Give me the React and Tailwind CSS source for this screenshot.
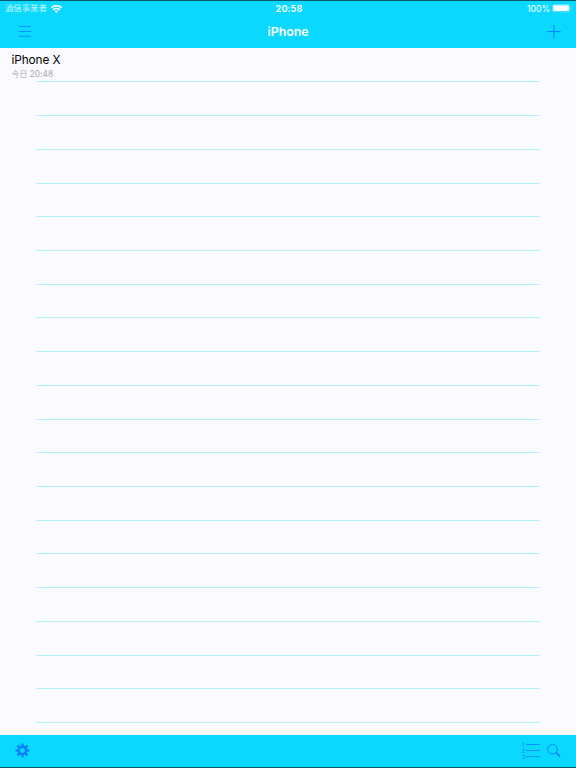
const emptyRows = Array.from({ length: 19 }, (_, i) => i);

function StatusBar() {
    return (
        <div className="grid h-[15px] grid-cols-3 items-center pr-[4px] pl-[5px] text-white">
            <div className="flex items-center gap-[4px]">
                <span className="text-[8.4px] leading-none font-light whitespace-nowrap">通信事業者</span>
                <svg width="11" height="8" viewBox="0 0 11 8" fill="none" stroke="currentColor" strokeWidth="1.6">
                    <path d="M.3 2.9C3.2 0 7.8 0 10.7 2.9" />
                    <path d="M2.3 4.9c1.8-1.7 4.6-1.7 6.4 0" />
                    <path d="M5.5 8 3.7 6.2c1-.9 2.6-.9 3.6 0z" fill="currentColor" stroke="none" />
                </svg>
            </div>
            <span className="pl-[1px] text-center text-[9.2px] leading-none font-semibold tracking-[0.1px]">20:58</span>
            <div className="flex items-center justify-end gap-[2px]">
                <span className="pt-px text-[8.8px] leading-none tracking-[-0.1px]">100%</span>
                <svg width="20" height="9" viewBox="0 0 20 9">
                    <rect x=".4" y=".4" width="17.4" height="7.4" rx="1.8" fill="none" stroke="white" strokeOpacity=".45" strokeWidth=".7" />
                    <rect x="1.3" y="1.3" width="15.6" height="5.6" rx="1" fill="white" />
                    <path d="M18.6 2.9c1.2.4 1.2 2 0 2.4z" fill="white" fillOpacity=".5" />
                </svg>
            </div>
        </div>
    );
}

function NavBar() {
    return (
        <div className="grid h-[31px] grid-cols-[1fr_auto_1fr] items-center pr-[15px] pl-[19px]">
            <button>
                <svg width="12" height="11" viewBox="0 0 12 11" stroke="#087fff" strokeWidth="0.8">
                    <path d="M0 .5h12M0 5.5h12M0 10.3h12" />
                </svg>
            </button>
            <h1 className="-ml-1 pt-[2px] text-center text-[12.4px] leading-none font-semibold tracking-[-0.05px] text-white">iPhone</h1>
            <button className="justify-self-end">
                <svg width="14" height="14" viewBox="0 0 14 14" stroke="#087fff" strokeWidth="1">
                    <path d="M.4 6.6h13.2M7 0v13.2" />
                </svg>
            </button>
        </div>
    );
}

function GearIcon() {
    return (
        <svg width="15" height="15" viewBox="-7.5 -7.5 15 15" stroke="#087fff" fill="none">
            <circle r="3.7" strokeWidth="2.6" />
            <path strokeWidth="2.1" d="M0-4.3V-7.1M0 4.3V7.1M-4.3 0H-7.1M4.3 0H7.1M-3.1-3.1-5-5M3.1-3.1 5-5M-3.1 3.1-5 5M3.1 3.1 5 5" />
        </svg>
    );
}

function NumberedListIcon() {
    return (
        <div className="flex">
            <div className="flex w-1 flex-col text-[5px] leading-[6px] text-[#087fff]">
                <span>1</span>
                <span>2</span>
                <span>3</span>
            </div>
            <svg width="15" height="18" viewBox="0 0 15 18" stroke="#087fff" strokeWidth="0.8">
                <path d="M0 2.5h14.2M0 8.6h14.2M0 14.7h14.2" />
            </svg>
        </div>
    );
}

function SearchIcon() {
    return (
        <svg width="14" height="14" viewBox="0 0 14 14" fill="none" stroke="#087fff">
            <circle cx="5.5" cy="5.2" r="4.8" strokeWidth="0.9" />
            <path d="m9 8.7 4.1 4" strokeWidth="1.7" />
        </svg>
    );
}

export default function App() {
    return (
        <div className="flex h-[768px] w-[576px] flex-col overflow-hidden bg-[#fbfbff] font-[Inter,'Noto_Sans_CJK_JP',sans-serif]">
            <header className="h-12 shrink-0 border-t border-[#075b6c] bg-[#0bd8ff]">
                <StatusBar />
                <NavBar />
            </header>

            <main className="min-h-0 flex-1 overflow-hidden">
                <div className="flex h-[34.4px] flex-col">
                    <div className="flex-1 pt-[4px] pl-[11.5px]">
                        <p className="text-[11.8px] leading-[16px] tracking-[-0.1px] text-black">iPhone X</p>
                        <p className="flex gap-[2px] text-[8px] leading-[12px] text-[#a9a9ad]">
                            <span>今日</span>
                            <span className="text-[8.4px] tracking-[0.1px]">20:48</span>
                        </p>
                    </div>
                    <div className="mx-9 h-px shrink-0 bg-[#b1effb]" />
                </div>
                {emptyRows.map((row) => (
                    <div key={row} className="flex h-[33.72px] flex-col justify-end">
                        <div className="mx-9 h-px bg-[#b1effb]" />
                    </div>
                ))}
            </main>

            <footer className="flex h-[33px] shrink-0 items-center justify-between border-b border-[#075b6c] bg-[#0bd8ff] px-[15px] pb-px">
                <button>
                    <GearIcon />
                </button>
                <div className="flex items-center gap-[6px]">
                    <NumberedListIcon />
                    <SearchIcon />
                </div>
            </footer>
        </div>
    );
}
